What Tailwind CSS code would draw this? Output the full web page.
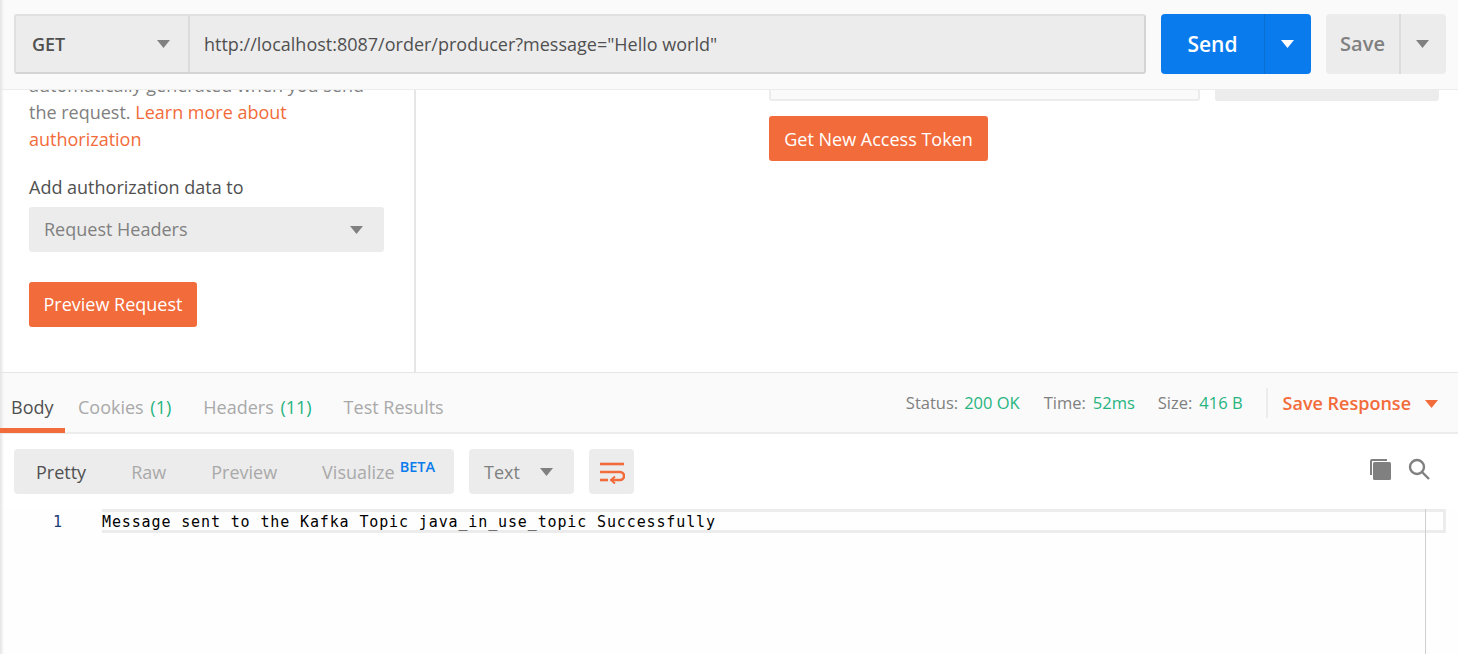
<!DOCTYPE html>
<html lang="en">
<head>
    <meta charset="UTF-8">
    <title>Postman</title>
    <script src="https://cdn.jsdelivr.net/npm/@tailwindcss/browser@4"></script>
</head>
<body class="bg-white">
<div class="relative w-[1458px] h-[654px] overflow-hidden flex flex-col font-['Open_Sans',sans-serif] text-[#808080]">

    <!-- left edge shadow -->
    <div class="absolute left-0 top-0 bottom-0 w-[4px] z-20 bg-gradient-to-r from-[#e4e4e4] to-transparent"></div>

    <!-- request bar -->
    <header class="relative z-10 h-[90px] shrink-0 bg-[#fafafa] border-b border-[#ececec] pt-[14px] pl-[14px] flex">
        <div class="w-[1132px] h-[60px] flex bg-[#ececec] border-2 border-[#d4d4d4] border-t-[#e0e0e0] border-l-[#e0e0e0] rounded-[3px] border-r-[#d4d4d4]">
            <div class="w-[174px] shrink-0 flex items-center justify-between pl-[16px] pr-[18px] border-r-2 border-[#dcdcdc] border-b-0">
                <span class="text-[18px] font-semibold text-[#505050]">GET</span>
                <svg width="13" height="8" viewBox="0 0 13 8"><path d="M0 0h13L6.5 8z" fill="#808080"/></svg>
            </div>
            <div class="flex-1 flex items-center pl-[14px] text-[18px] text-[#505050]">http://localhost:8087/order/producer?message="Hello world"</div>
        </div>
        <div class="ml-[15px] w-[150px] h-[60px] flex bg-[#097bed] rounded-[4px] text-white">
            <div class="w-[104px] flex items-center justify-center pt-[1px] text-[21px] font-semibold border-r border-[#0a6fd3]">Send</div>
            <div class="flex-1 flex items-center justify-center pr-[2px]">
                <svg width="13" height="8" viewBox="0 0 13 8"><path d="M0 0h13L6.5 8z" fill="#fff"/></svg>
            </div>
        </div>
        <div class="ml-[15px] w-[120px] h-[60px] flex bg-[#ececec] rounded-[4px]">
            <div class="w-[75px] flex items-center justify-center text-[20px] font-semibold border-r-2 border-[#dcdcdc]">Save</div>
            <div class="flex-1 flex items-center justify-center pr-[2px]">
                <svg width="13" height="8" viewBox="0 0 13 8"><path d="M0 0h13L6.5 8z" fill="#808080"/></svg>
            </div>
        </div>
    </header>

    <!-- authorization panes -->
    <section class="h-[283px] shrink-0 flex overflow-hidden border-b border-[#e6e6e6]">
        <div class="w-[416px] shrink-0 border-r-2 border-[#e6e6e6] pl-[29px] pr-[30px] -mt-[18px]">
            <p class="text-[18px] leading-[27px]">automatically generated when you send the request. <span class="text-[#f26b3a]">Learn more about authorization</span></p>
            <p class="mt-[21px] text-[18px] leading-[27px] text-[#505050]">Add authorization data to</p>
            <div class="mt-[6px] w-[355px] h-[45px] bg-[#ececec] rounded-[3px] flex items-center justify-between pl-[15px] pr-[21px] text-[18px]">
                <span>Request Headers</span>
                <svg width="13" height="8" viewBox="0 0 13 8"><path d="M0 0h13L6.5 8z" fill="#808080"/></svg>
            </div>
            <div class="mt-[30px] w-[168px] h-[45px] bg-[#f26b3a] rounded-[3px] flex items-center justify-center text-[18px] text-white">Preview Request</div>
        </div>
        <div class="pl-[353px] -mt-[30px]">
            <div class="flex gap-[15px]">
                <div class="w-[431px] h-[41px] bg-[#fafafa] border-2 border-[#ececec] rounded-[3px]"></div>
                <div class="w-[224px] h-[41px] bg-[#ececec] rounded-[3px]"></div>
            </div>
            <div class="mt-[15px] w-[219px] h-[45px] bg-[#f26b3a] rounded-[3px] flex items-center justify-center pt-[1px] text-[18px] text-white">Get New Access Token</div>
        </div>
    </section>

    <!-- response tabs -->
    <div class="h-[61px] shrink-0 bg-[#fafafa] border-b-2 border-[#ececec] flex justify-between">
        <nav class="flex text-[18px] text-[#a9a9a9]">
            <div class="relative z-30 w-[65px] pl-[11px] pt-[21px] border-b-[5px] border-[#f26b3a] h-[60px] text-[#505050]">Body</div>
            <div class="ml-[13px] pt-[21px]">Cookies <span class="ml-[2px] text-[#26b47f]">(1)</span></div>
            <div class="ml-[32px] pt-[21px]">Headers <span class="ml-[2px] text-[#26b47f]">(11)</span></div>
            <div class="ml-[32px] pt-[21px]">Test Results</div>
        </nav>
        <div class="flex items-start pt-[15px] text-[16.5px] leading-[30px] pr-[20px]">
            <span>Status:</span><span class="ml-[6px] text-[#26b47f]">200 OK</span>
            <span class="ml-[24px]">Time:</span><span class="ml-[7px] text-[#26b47f]">52ms</span>
            <span class="ml-[23px]">Size:</span><span class="ml-[7px] text-[#26b47f]">416 B</span>
            <div class="ml-[23px] w-[2px] h-[30px] bg-[#ececec]"></div>
            <span class="ml-[15px] text-[18px] font-semibold text-[#f26b3a]">Save Response</span>
            <svg class="ml-[14px] mt-[12px]" width="13" height="8" viewBox="0 0 13 8"><path d="M0 0h13L6.5 8z" fill="#f26b3a"/></svg>
        </div>
    </div>

    <!-- response toolbar -->
    <div class="h-[75px] shrink-0 pt-[15px] pl-[14px] pr-[28px] flex">
        <div class="w-[440px] h-[45px] bg-[#ececec] rounded-[4px] flex items-center pt-[1px] text-[18px] text-[#a9a9a9]">
            <span class="ml-[22px] text-[#505050]">Pretty</span>
            <span class="ml-[45px]">Raw</span>
            <span class="ml-[45px]">Preview</span>
            <span class="ml-[45px]">Visualize</span>
            <span class="ml-[5px] -mt-[11px] text-[14.5px] font-semibold text-[#097bed]">BETA</span>
        </div>
        <div class="ml-[15px] w-[105px] h-[45px] bg-[#ececec] rounded-[4px] flex items-center justify-between pl-[15px] pr-[21px] text-[18px]">
            <span class="pt-[1px]">Text</span>
            <svg width="13" height="8" viewBox="0 0 13 8"><path d="M0 0h13L6.5 8z" fill="#808080"/></svg>
        </div>
        <div class="ml-[15px] w-[45px] h-[45px] bg-[#ececec] rounded-[4px] flex items-center justify-center">
            <svg width="26" height="24" viewBox="0 0 26 24" fill="none" stroke="#f26b3a" stroke-width="2.6">
                <path d="M1 4h24"/>
                <path d="M1 12h20a4 4 0 0 1 0 8h-8"/>
                <path d="M1 20h8"/>
                <path d="M16 16.5l-4 3.5 4 3.5" stroke-width="2"/>
            </svg>
        </div>
        <div class="ml-auto flex items-start gap-[17px] pt-[9px]">
            <svg width="22" height="22" viewBox="0 0 22 22">
                <path d="M1 17V3a2 2 0 0 1 2-2h15v2H3v14z" fill="#808080"/>
                <rect x="4" y="4" width="18" height="18" rx="1.5" fill="#808080"/>
            </svg>
            <svg width="22" height="22" viewBox="0 0 22 22" fill="none" stroke="#808080" stroke-width="2.4">
                <circle cx="9" cy="9" r="7"/>
                <path d="M14 14l7 7"/>
            </svg>
        </div>
    </div>

    <!-- response body -->
    <div class="relative flex-1 bg-[#fffefe] font-['DejaVu_Sans_Mono',monospace]">
        <div class="absolute left-[1425px] top-0 bottom-0 w-px bg-[#cfcfcf]"></div>
        <div class="flex h-[24px] items-center">
            <span class="w-[102px] pr-[40px] pt-[3px] text-right text-[15px] text-[#1d3c78]">1</span>
            <div class="w-[1344px] h-[24px] border-[3px] border-[#ececec] border-l-0 flex items-center pt-[2px] text-[15px] tracking-[0.87px] text-black whitespace-pre">Message sent to the Kafka Topic java_in_use_topic Successfully</div>
        </div>
    </div>
</div>
</body>
</html>
